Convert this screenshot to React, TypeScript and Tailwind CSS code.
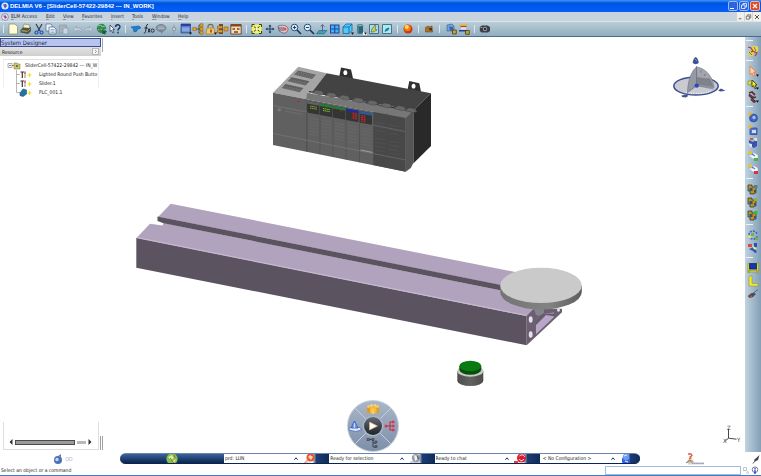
import type { ReactNode } from 'react';

type IconProps = { children: ReactNode };

const Icon = ({ children }: IconProps) => (
  <svg viewBox="0 0 12 12" className="h-3 w-3 shrink-0" aria-hidden="true">
    {children}
  </svg>
);

const DropMark = () => <path d="M9 9.500h3L10.500 11.800z" fill="#111" />;

type Tool = { label: string; icon: ReactNode };

const fileTools: Tool[] = [
  {
    label: 'New',
    icon: <path d="M2 1h6l2.500 2.500V11H2z" fill="#fffbd8" stroke="#8a8a62" strokeWidth=".7" />,
  },
  {
    label: 'Print',
    icon: (
      <>
        <path d="M4 1l6 1-1 4-6-1z" fill="#f4eec4" stroke="#666" strokeWidth=".5" />
        <path d="M.500 7l2.500-2.500 6 .5L11 4v4l-3 3-7.500-1.500z" fill="#4f5445" />
        <path d="M1.500 7l6 .8v1.200l-6-.8z" fill="#b0a44c" />
        <path d="M8 8l2.500-2.500" stroke="#a8a99a" strokeWidth=".8" />
      </>
    ),
  },
  {
    label: 'Cut',
    icon: (
      <>
        <path d="M3 1l4 7M9 1L5 8" stroke="#30364e" strokeWidth="1.100" />
        <circle cx="3.500" cy="9.500" r="1.500" fill="none" stroke="#1d55b5" strokeWidth="1.200" />
        <circle cx="8.500" cy="9.500" r="1.500" fill="none" stroke="#1d55b5" strokeWidth="1.200" />
      </>
    ),
  },
  {
    label: 'Copy',
    icon: (
      <>
        <path d="M1 1h5l1 1v6H1z" fill="#eef3fb" stroke="#51688c" strokeWidth=".7" />
        <path d="M4 4h5l2 2v5H4z" fill="#eef3fb" stroke="#51688c" strokeWidth=".7" />
        <path d="M5.500 6.500h4M5.500 8h4M5.500 9.500h4" stroke="#6c86b5" strokeWidth=".6" />
      </>
    ),
  },
  {
    label: 'Paste',
    icon: (
      <>
        <path d="M1.500 2h7v8h-7z" fill="#a5b3bd" stroke="#8c9ba7" strokeWidth=".7" />
        <path d="M5 5h5v6H5z" fill="#c9d4db" stroke="#8c9ba7" strokeWidth=".7" />
      </>
    ),
  },
  {
    label: 'Undo',
    icon: <path d="M2 6l3.500-3v2H8c2 0 3 1.500 2 4.500-.5-1.500-1-2-2-2H5.500v2z" fill="#c2ced6" stroke="#8fa0ac" strokeWidth=".6" />,
  },
  {
    label: 'Redo',
    icon: <path d="M10 6L6.500 3v2H4C2 5 1 6.500 2 9.500c.5-1.500 1-2 2-2h2.500v2z" fill="#c2ced6" stroke="#8fa0ac" strokeWidth=".6" />,
  },
  {
    label: 'Update',
    icon: (
      <>
        <circle cx="5.500" cy="5.500" r="4.700" fill="#2c8a52" />
        <path d="M2 3l3-1 1 2 3-1M2 7l3-1 2 2 3-2" stroke="#7fcf8e" strokeWidth="1" fill="none" />
        <path d="M6 7l5 1-2 3.500-3-1z" fill="#1d6240" />
        <path d="M3 5l2 3" stroke="#a23c34" strokeWidth="1" />
      </>
    ),
  },
  {
    label: 'Help pointer',
    icon: (
      <>
        <path d="M1 2l4.500 4.500H3.800L5 9.500l-1.200.5L2.600 7.200 1 8.500z" fill="#fff" stroke="#16335f" strokeWidth=".7" />
        <path d="M6.500 4c0-3 4.500-3 4.500-.3C11 5.500 9 5.300 9 7.500M9 8.800v1.600" fill="none" stroke="#15396f" strokeWidth="1.400" />
      </>
    ),
  },
];

const knowledgeTools: Tool[] = [
  {
    label: 'Catalog',
    icon: <path d="M1 4l8-1 2 2-4 1.500V8L4 9l-.5-3z" fill="#1685d8" stroke="#0b579e" strokeWidth=".6" />,
  },
  {
    label: 'Formula',
    icon: (
      <>
        <path d="M5 1.500C3.500 1 3.300 3 3 5.500S2.500 10.500.800 10M1.500 5h3" fill="none" stroke="#16222e" strokeWidth="1" />
        <path d="M5 5.500l2 4M7 5.500l-2 4" stroke="#16222e" strokeWidth=".9" />
        <circle cx="9.600" cy="7.600" r="1.600" fill="none" stroke="#16222e" strokeWidth=".9" />
      </>
    ),
  },
  {
    label: 'Comment',
    icon: (
      <>
        <ellipse cx="6" cy="5" rx="5" ry="3.500" fill="#8a98a5" stroke="#66747f" strokeWidth=".7" />
        <path d="M4 7h4l-1 4z" fill="#77858f" />
        <path d="M3 4h6M3 5.500h6" stroke="#b4c0c9" strokeWidth=".7" />
      </>
    ),
  },
  {
    label: 'Link',
    icon: <path d="M6 1.500v3M4.500 4.500h3v3h-3zM6 8v3" stroke="#8fa0ad" strokeWidth="1" fill="#c0ccd4" />,
  },
  {
    label: 'Design table',
    icon: (
      <>
        <path d="M1 1h9.500v9H1z" fill="#5b7ec9" stroke="#31508f" strokeWidth=".8" />
        <path d="M1 1h9.500v2H1z" fill="#2c3e9b" />
        <path d="M2 4.500h7.500v4H2z" fill="#8aa8df" />
        <DropMark />
      </>
    ),
  },
  {
    label: 'Structure',
    icon: (
      <>
        <path d="M4 6h4M7 2v8M7 2h2M7 10h2" stroke="#3d3b2a" strokeWidth=".8" fill="none" />
        <path d="M.800 4.500h3.500v3H.800zM8 .800h3v3H8zM8 4.500h3v3H8zM8 8.200h3v3H8z" fill="#e79e22" stroke="#8b5a10" strokeWidth=".5" />
      </>
    ),
  },
  {
    label: 'Lock',
    icon: (
      <>
        <path d="M3 5V3.500C3 .700 8 .700 8 3.500V5" fill="none" stroke="#776d4d" strokeWidth="1.100" />
        <path d="M2 5h7l1 6H1z" fill="#efc873" stroke="#a8721b" strokeWidth=".6" />
        <path d="M5 6.500h2v3H5z" fill="#c0581d" />
        <DropMark />
      </>
    ),
  },
  {
    label: 'Rules',
    icon: (
      <>
        <path d="M2 1h4v10H2z" fill="#7b4c1c" />
        <path d="M.500 3h5v2.500h-5zM.500 7h5v2.500h-5zM7 4h4v4H7z" fill="#e3a02d" stroke="#7b4c1c" strokeWidth=".5" />
      </>
    ),
  },
  {
    label: 'Checks',
    icon: (
      <>
        <path d="M.800 1.500h10.400v9.500H.800z" fill="#e9dfc9" stroke="#6e3a1d" strokeWidth=".9" />
        <path d="M1 2h10v1.500H1z" fill="#8a461f" />
        <path d="M2.500 5h2.500v2H2.500zM7 5h2.500v2H7zM4 8h4v2H4z" fill="#b1641f" />
      </>
    ),
  },
];

const viewTools: Tool[] = [
  {
    label: 'Fit all in',
    icon: (
      <>
        <path d="M1 1.500h9.500v9H1z" fill="#f5f06c" />
        <path d="M1 4V1.500h2.500M8 1.500h2.500V4M1 8v2.500h2.500M8 10.500h2.500V8M3 3.500l5.500 5M8.500 3.500L3 8.500" stroke="#35421e" strokeWidth="1" fill="none" />
        <path d="M4.800 5h2v2h-2z" fill="#fff" />
      </>
    ),
  },
  {
    label: 'Pan',
    icon: (
      <>
        <path d="M6 2v8M2 6h8" stroke="#223f6e" strokeWidth="1.100" />
        <path d="M6 1.500l1.500 2h-3zM6 10.500l-1.500-2h3zM1.500 6l2-1.500v3zM10.500 6l-2 1.500v-3z" fill="#223f6e" />
      </>
    ),
  },
  {
    label: 'Rotate',
    icon: (
      <>
        <path d="M1 3c3-1 6-1 8 0l2 2v2l-2 3H6L2 8z" fill="#f3bfb0" stroke="#5d597c" strokeWidth=".7" />
        <path d="M1 5h6M2 7h5" stroke="#33508f" strokeWidth=".9" />
        <circle cx="8" cy="6" r="1.500" fill="#c9566a" />
      </>
    ),
  },
  {
    label: 'Zoom in',
    icon: (
      <>
        <circle cx="4.500" cy="4.500" r="3.300" fill="#d8f2f7" stroke="#2c4f77" strokeWidth="1" />
        <path d="M7 7l4 4" stroke="#1c3a60" strokeWidth="1.700" />
        <path d="M4.500 2.800v3.400M2.800 4.500h3.400" stroke="#182f55" strokeWidth=".9" />
      </>
    ),
  },
  {
    label: 'Zoom out',
    icon: (
      <>
        <circle cx="4.500" cy="4.500" r="3.300" fill="#d8f2f7" stroke="#2c4f77" strokeWidth="1" />
        <path d="M7 7l4 4" stroke="#1c3a60" strokeWidth="1.700" />
        <path d="M2.800 4.500h3.400" stroke="#182f55" strokeWidth=".9" />
      </>
    ),
  },
  {
    label: 'Normal view',
    icon: (
      <>
        <path d="M3 7.500h8L8 10.800H.500z" fill="#34a7b1" stroke="#1c5f72" strokeWidth=".6" />
        <path d="M6.500 8.500V2M4.800 3.500l1.700-2 1.700 2" stroke="#5e5cae" strokeWidth="1" fill="none" />
      </>
    ),
  },
  {
    label: 'Multi view',
    icon: (
      <>
        <path d="M1 1.500h9.500v9H1z" fill="#2b3da0" />
        <path d="M2 2.500h3.200v3H2zM6.300 2.500h3.200v3H6.300zM2 6.600h3.200v3H2zM6.300 6.600h3.200v3H6.300z" fill="#39b9f0" />
      </>
    ),
  },
  {
    label: 'Isometric view',
    icon: (
      <>
        <path d="M1 4l3-3h6v6.500l-3 3H1z" fill="#4fc9f5" stroke="#1661a6" strokeWidth=".8" />
        <path d="M1 4h6v6.500M7 4l3-3" fill="none" stroke="#1661a6" strokeWidth=".8" />
        <DropMark />
      </>
    ),
  },
  {
    label: 'Shading',
    icon: (
      <>
        <path d="M2 2.500v7c0 1.800 6 1.800 6 0v-7z" fill="#296675" />
        <path d="M3 3v7" stroke="#69a5b1" strokeWidth="1" />
        <ellipse cx="5" cy="2.500" rx="3" ry="1.200" fill="#77b5bd" stroke="#2d5561" strokeWidth=".5" />
        <path d="M8 9h4v3H8z" fill="#f5f5f5" />
        <DropMark />
      </>
    ),
  },
  {
    label: 'Hide or show',
    icon: (
      <>
        <path d="M1.500 1.500h9v9h-9z" fill="#9fe2ee" stroke="#54717f" strokeWidth="1" />
        <path d="M3 9l1-3 3-4 1 1-1 3 2 1-4 2z" fill="#d7cc4d" stroke="#475b3a" strokeWidth=".6" />
      </>
    ),
  },
  {
    label: 'Swap visible space',
    icon: (
      <>
        <path d="M1.500 1.500h9v9h-9z" fill="#a5ecf7" stroke="#54717f" strokeWidth="1" />
        <path d="M3.500 9l1-3 3-1.500 1 1-1.500 2z" fill="#28769c" />
      </>
    ),
  },
];

const renderTools: Tool[] = [
  {
    label: 'Apply material',
    icon: (
      <>
        <circle cx="6" cy="6" r="4.500" fill="#cc3510" />
        <circle cx="5.500" cy="5" r="3.300" fill="#f47b16" />
        <circle cx="4.800" cy="4" r="1.900" fill="#ffe24c" />
      </>
    ),
  },
];

const packTools: Tool[] = [
  {
    label: 'Package',
    icon: (
      <>
        <path d="M2.500 4.500l2.500-1.500 1 1 3-1 .5 6h-7z" fill="#a97125" stroke="#6f4a1b" strokeWidth=".6" />
        <path d="M5.500 5h3.500v2.500H7z" fill="#4a3519" />
      </>
    ),
  },
];

const lockTools: Tool[] = [
  {
    label: 'Locked server',
    icon: (
      <>
        <path d="M2 2l5-1 2 2v5L2 8z" fill="#6aa5dc" stroke="#36588b" strokeWidth=".6" />
        <path d="M4 3.500l4 .5v4L5 7.500z" fill="#4263a2" />
        <path d="M7.500 7h3.800v4H7.500z" fill="#c6a32b" stroke="#3a3212" strokeWidth=".7" />
      </>
    ),
  },
  {
    label: 'Locked table',
    icon: (
      <>
        <path d="M1.500 1.500h8v1.500h-8z" fill="#e6b022" />
        <path d="M2.500 3h6v1h-6z" fill="#d03d2d" />
        <path d="M1 7h8v1.500H1z" fill="#2b3d9f" />
        <path d="M3 4.500h5v2H3z" fill="#dfe6ea" />
        <path d="M7.500 7.500h3.800v3.800H7.500z" fill="#c6a32b" stroke="#3a3212" strokeWidth=".7" />
      </>
    ),
  },
];

const captureTools: Tool[] = [
  {
    label: 'Capture',
    icon: (
      <>
        <path d="M.800 4L3 2.500h5.500L11 4v4L9 9.500H2.500L.800 8z" fill="#3b4048" />
        <circle cx="6" cy="6" r="2.200" fill="#8d959e" />
        <circle cx="6" cy="6" r="1.100" fill="#171b21" />
        <path d="M1.500 4.500h2" stroke="#aeb6bf" strokeWidth=".8" />
      </>
    ),
  },
];

const toolGroups = [
  { tools: fileTools, width: 'w-[114px]' },
  { tools: knowledgeTools, width: 'w-[112px]' },
  { tools: viewTools, width: 'w-[142px]' },
  { tools: renderTools, width: 'w-3' },
  { tools: packTools, width: 'w-3' },
  { tools: lockTools, width: 'w-[26px]' },
  { tools: captureTools, width: 'w-3' },
];

const blocks = (mark: string) => (
  <>
    <path d="M1 2h4v2h4v6H7v1H3V8H1z" fill="#c98b21" stroke="#27423f" strokeWidth=".8" />
    <path d="M2.500 5h3v3h-3zM7 7h2v2H7z" fill="#245f77" />
    <path d="M7 2h3.500v3H7z" fill={mark} />
  </>
);

const sideGroups: Tool[][] = [
  [
    {
      label: 'System Designer',
      icon: (
        <>
          <circle cx="8" cy="4" r="3.300" fill="#efd740" />
          <circle cx="4" cy="8.500" r="2.800" fill="#e5cf3d" />
          <path d="M1 2l3 1 2 3-2 1M6 6l4 2-2 3" stroke="#b13b2e" strokeWidth="1.100" fill="none" />
          <path d="M7 2l2 4M2 7l3 3" stroke="#5b7f9b" strokeWidth="1" />
        </>
      ),
    },
  ],
  [
    {
      label: 'Select',
      icon: (
        <>
          <path d="M3 1l6 6-2.500.2L8 10.500l-1.600.7L5 8 3 9.800z" fill="#ffd2ac" stroke="#f07f40" strokeWidth=".9" />
          <DropMark />
        </>
      ),
    },
    {
      label: 'Select box',
      icon: (
        <>
          <path d="M1 3h6v2H4v2H1z" fill="#e8dd30" stroke="#6c6c22" strokeWidth=".5" />
          <path d="M5 2l5 5-2 .2 1.200 3-1.400.5-1.200-3L5 9z" fill="#f7ec35" stroke="#30331a" strokeWidth=".8" />
          <DropMark />
        </>
      ),
    },
    {
      label: 'Connections',
      icon: (
        <>
          <path d="M2 2l3-1 3 3M2 4l3 3 4-1M4 8l3 3 2-1" fill="none" stroke="#722c35" strokeWidth="1.800" />
          <path d="M2 3l6 4M4 6l4 4" stroke="#272a31" strokeWidth=".9" />
          <DropMark />
        </>
      ),
    },
  ],
  [
    {
      label: 'New component',
      icon: (
        <>
          <circle cx="6.500" cy="7" r="4" fill="#3f64c4" stroke="#273f89" strokeWidth=".6" />
          <circle cx="7" cy="6.500" r="1.700" fill="#a4bcf0" />
          <path d="M3 .500l1 1.800 2 .7-2 .8-1 2-1-2-1.500-.8L2 2.300z" fill="#f1b521" />
        </>
      ),
    },
    {
      label: 'New port',
      icon: (
        <>
          <path d="M3 4h7v6.500H3z" fill="#5377d1" stroke="#2c479a" strokeWidth=".8" />
          <path d="M5 6h4v3H5z" fill="#cedcf8" />
          <path d="M3 .500l1 1.800 2 .7-2 .8-1 2-1-2-1.500-.8L2 2.300z" fill="#f1b521" />
        </>
      ),
    },
    {
      label: 'Import component',
      icon: (
        <>
          <path d="M2 3l4 2 4-3v7l-3 2-5-3z" fill="#3952ad" />
          <path d="M1 6l4 1v3H3zM7 1h3v3H8z" fill="#dae2ef" />
          <path d="M3 1h3v2H3z" fill="#cf593c" />
        </>
      ),
    },
    {
      label: 'Add behavior',
      icon: (
        <>
          <path d="M1 5h5V2l5 3v4L6 9z" fill="#f4f7fb" stroke="#94a0ad" strokeWidth=".5" />
          <path d="M1 1.500h4v2.500H1z" fill="#e8c52e" />
          <path d="M7 8h4v3H7z" fill="#45b641" />
          <path d="M5 4l3 2" stroke="#5876cc" strokeWidth="1.200" />
        </>
      ),
    },
    {
      label: 'Remove behavior',
      icon: (
        <>
          <path d="M1 5h5V2l5 3v4L6 9z" fill="#f4f7fb" stroke="#94a0ad" strokeWidth=".5" />
          <path d="M1 1.500h4v2.500H1z" fill="#e8c52e" />
          <path d="M7 8h4v3H7z" fill="#d8304a" />
          <path d="M5 4l3 2" stroke="#5876cc" strokeWidth="1.200" />
        </>
      ),
    },
  ],
  [
    { label: 'Logic block', icon: blocks('#57846a') },
    { label: 'Edit block', icon: blocks('#9aab47') },
    { label: 'Run block', icon: blocks('#2fc139') },
  ],
  [
    {
      label: 'Synchronize',
      icon: (
        <>
          <path d="M2 6c0-5 7-5 8-1M10 7c0 4-7 4-8 1" stroke="#3d62bc" strokeWidth="1.500" fill="none" strokeDasharray="2 1" />
          <path d="M4 4h3v3H4zM8 8h3v3H8z" fill="#6fb04f" />
          <path d="M1 7h3v2H1z" fill="#e8de6a" />
        </>
      ),
    },
    {
      label: 'Assign',
      icon: (
        <>
          <path d="M1 2h4v3H1z" fill="#de4b3e" />
          <path d="M7 1h3v4H7z" fill="#284fc0" />
          <path d="M2 7l5-2 3 5-2 1-2-2z" fill="#3155bc" />
          <path d="M5 3l5 4-3 .5z" fill="#f7ef83" />
        </>
      ),
    },
  ],
  [
    {
      label: 'Panel layout',
      icon: (
        <>
          <path d="M.800 1h2v10h-2zM9.500 1h2v10h-2zM1 8.500h10V10H1z" fill="#dfda29" stroke="#7d7c1a" strokeWidth=".4" />
          <path d="M2.500 1.500h7v5.500h-7z" fill="#1736a8" stroke="#0d2068" strokeWidth=".7" />
        </>
      ),
    },
    {
      label: 'Measure',
      icon: <path d="M2 1h3v7.500h6V11H2z" fill="#f3ec30" stroke="#93912b" strokeWidth=".6" />,
    },
    {
      label: 'Probe',
      icon: (
        <>
          <path d="M.800 8l3-2.500 3-1L9 6 6 9l-3.500 1z" fill="#4c4e53" />
          <path d="M7 4.500l4-3" stroke="#52565d" strokeWidth=".8" />
          <path d="M3 7.500h2v1.500H3z" fill="#cf4830" />
        </>
      ),
    },
  ],
];

const menus = [
  { name: 'ELM Access', width: 'w-[35px]' },
  { name: 'Edit', width: 'w-[17px]' },
  { name: 'View', width: 'w-[19px]' },
  { name: 'Favorites', width: 'w-[29px]' },
  { name: 'Insert', width: 'w-[21px]' },
  { name: 'Tools', width: 'w-[20px]' },
  { name: 'Window', width: 'w-[26px]' },
  { name: 'Help', width: 'w-[14px]' },
];

const ToolButton = ({ tool }: { tool: Tool }) => (
  <button type="button" aria-label={tool.label} className="flex h-[13px] flex-1 items-center justify-center">
    <Icon>{tool.icon}</Icon>
  </button>
);

const TitleBar = () => (
  <header className="flex h-3 shrink-0 items-center bg-linear-to-b from-[#3d95ff] via-[#0054e0] via-25% to-[#0560fa] px-px">
    <svg viewBox="0 0 8 8" className="h-2 w-2" aria-hidden="true">
      <circle cx="4" cy="4" r="3.600" fill="#dfe7fb" />
      <path d="M2 2.500l3-.5 1 2-2 2.500L3 4.500z" fill="#3a60b8" />
      <path d="M3 3l2 2" stroke="#d0494b" strokeWidth=".8" />
    </svg>
    <h1 className="flex-1 pl-px font-['Liberation_Sans',sans-serif] text-[6px] leading-[8px] font-bold whitespace-nowrap text-white">
      DELMIA V6 - [SliderCell-57422-29842 --- IN_WORK]
    </h1>
    <div className="flex gap-px">
      <button type="button" aria-label="Minimize" className="flex h-[10px] w-[10px] items-end rounded-xs border border-[#9db9f5] bg-[#2c63df] p-px">
        <span className="h-px w-1 bg-white" />
      </button>
      <button type="button" aria-label="Restore" className="flex h-[10px] w-[10px] items-center justify-center rounded-xs border border-[#9db9f5] bg-[#2c63df]">
        <svg viewBox="0 0 8 8" className="h-2 w-2">
          <path d="M3 3V1.500h3.500V5H5M1.500 3H5v3.500H1.500z" fill="none" stroke="#fff" strokeWidth=".8" />
        </svg>
      </button>
      <button type="button" aria-label="Close" className="flex h-[10px] w-[10px] items-center justify-center rounded-xs border border-[#f1b5a4] bg-[#df4a25]">
        <svg viewBox="0 0 8 8" className="h-2 w-2">
          <path d="M2 2l4 4M6 2L2 6" stroke="#fff" strokeWidth="1.200" />
        </svg>
      </button>
    </div>
  </header>
);

const MenuBar = () => (
  <nav className="flex h-[9px] shrink-0 items-center bg-[#c7d4de] pl-px">
    <svg viewBox="0 0 8 8" className="mr-[2px] h-2 w-2" aria-hidden="true">
      <circle cx="4" cy="4" r="3.400" fill="#e9e9f5" stroke="#7f79b5" strokeWidth=".8" />
      <path d="M2 2.500l3 .5 1 1.500-2 1.500z" fill="#c35067" />
      <path d="M4 2l1 3" stroke="#4252a0" strokeWidth=".8" />
    </svg>
    {menus.map((menu) => (
      <button key={menu.name} type="button" className={`${menu.width} text-left text-[5px] leading-[7px] whitespace-nowrap text-[#1f2733]`}>
        <span className="underline decoration-[#8a95a0] underline-offset-1">{menu.name[0]}</span>
        {menu.name.slice(1)}
      </button>
    ))}
    <div className="ml-auto flex h-full">
      <button type="button" aria-label="Minimize document" className="h-full w-2 border-r border-[#d7d7cf] bg-[#f1f0e9]">
        <svg viewBox="0 0 8 8" className="h-2 w-full">
          <path d="M2 6h3" stroke="#555" />
        </svg>
      </button>
      <button type="button" aria-label="Restore document" className="h-full w-2 border-r border-[#d7d7cf] bg-[#f1f0e9]">
        <svg viewBox="0 0 8 8" className="h-2 w-full">
          <path d="M3 3V1.500h3.500V5H5M1.500 3H5v3.500H1.500z" fill="none" stroke="#555" strokeWidth=".8" />
        </svg>
      </button>
      <button type="button" aria-label="Close document" className="h-full w-2 bg-[#f1f0e9]">
        <svg viewBox="0 0 8 8" className="h-2 w-full">
          <path d="M2 2l4 4M6 2L2 6" stroke="#555" />
        </svg>
      </button>
    </div>
  </nav>
);

const ToolBar = () => (
  <div role="toolbar" aria-label="Main tools" className="flex h-4 shrink-0 items-center border-t border-b border-t-[#dbe4ea] border-b-[#4c6c8e] bg-linear-to-b from-[#bacdd8] to-[#91adbf] pl-[3px]">
    {toolGroups.map((group, index) => (
      <div key={group.tools[0].label} className="flex items-center">
        <span className={index === 0 ? 'w-1' : 'flex w-[9px] justify-center'}>
          <span className="block h-2 w-px bg-[#dde7ec]" />
        </span>
        <div className={`flex items-center ${group.width}`}>
          {group.tools.map((tool) => (
            <ToolButton key={tool.label} tool={tool} />
          ))}
        </div>
      </div>
    ))}
  </div>
);

const treeItems = [
  { name: 'Lighted Round Push Butto', kind: 'part' },
  { name: 'Slider.1', kind: 'part' },
  { name: 'PLC_001.1', kind: 'plc' },
];

const ResourceTree = () => (
  <ul role="tree" aria-label="Resource" className="overflow-hidden pt-px pl-[3px] text-[5px] leading-[9px] whitespace-nowrap text-[#222]">
    <li role="treeitem" aria-expanded="true">
      <div className="flex h-[9px] items-center">
        <svg viewBox="0 0 18 9" className="h-[9px] w-[18px] shrink-0" aria-hidden="true">
          <path d="M1 2.500h4v4H1z" fill="#fff" stroke="#8b8b8b" strokeWidth=".7" />
          <path d="M2 4.500h2M5 4.500h2" stroke="#555" strokeWidth=".7" />
          <path d="M7 2h3l1 1h2v5H7z" fill="#cfc56a" stroke="#77723a" strokeWidth=".5" />
          <path d="M9 4h2v2H9z" fill="#5c7a58" />
        </svg>
        SliderCell-57422-29842 --- IN_W
      </div>
      <ul role="group">
        {treeItems.map((item, index) => (
          <li key={item.name} role="treeitem" className="flex h-[9px] items-center">
            <svg viewBox="0 0 32 9" className="h-[9px] w-8 shrink-0" aria-hidden="true">
              <path d={index === treeItems.length - 1 ? 'M9.500 0v4.500h3.500' : 'M9.500 0v9M9.500 4.500h3.500'} fill="none" stroke="#999" strokeWidth=".7" />
              {item.kind === 'part' ? (
                <>
                  <path d="M13.500 2h3.500M15.300 2V8" stroke="#3b3532" strokeWidth="1.200" />
                  <path d="M18 1.500v3" stroke="#a4462f" strokeWidth="1.300" />
                  <path d="M18 5v3" stroke="#555" strokeWidth=".7" />
                </>
              ) : (
                <path d="M13 5l3-4 3.500 1v4L16 8.500l-3-1z" fill="#2177a3" stroke="#194a72" strokeWidth=".6" />
              )}
              <path d="M22.500 3v4M20.500 5h4" stroke="#e8e21d" strokeWidth="1.100" />
            </svg>
            {item.name}
          </li>
        ))}
      </ul>
    </li>
  </ul>
);

const LeftPanel = () => (
  <aside className="flex w-[104px] shrink-0 flex-col pt-px pb-[2px]">
    <div className="flex">
      <div className="w-[101px] shrink-0">
        <h2 className="h-[9px] border border-[#3c4c8e] bg-[#b7c4ee] text-[6px] leading-[7px] whitespace-nowrap text-[#222a4a]">
          System Designer
        </h2>
        <div className="flex h-[9px] items-center justify-between bg-linear-to-b from-[#e2e2e2] to-[#cfcfcf] pr-[2px] pl-[2px]">
          <span className="text-[5px] leading-[8px] text-[#222]">Resource</span>
          <button type="button" aria-label="Expand resource panel" className="flex h-[7px] w-[7px] items-center justify-center border border-[#b5b5b5] bg-[#f4f4f4]">
            <svg viewBox="0 0 5 5" className="h-[5px] w-[5px]">
              <path d="M2 1l1.500 1.500L2 4" fill="none" stroke="#777" strokeWidth=".7" />
            </svg>
          </button>
        </div>
      </div>
      <span className="ml-px h-[14px] w-px bg-[#a8a8a8]" />
    </div>
    <div className="mt-[3px] mr-[5px] ml-[3px] flex flex-1 flex-col overflow-hidden border-t border-[#e2e2e2]">
      <div className="h-7 border-x border-[#eeeeee]">
        <ResourceTree />
      </div>
    </div>
    <div className="flex items-end">
      <div className="ml-[3px] flex h-7 w-[96px] items-end border-x border-b border-[#dedede] pb-1">
        <div className="flex w-full items-center gap-[2px] pr-[6px] pl-[5px]">
          <button type="button" aria-label="Scroll left">
            <svg viewBox="0 0 4 6" className="h-[6px] w-1">
              <path d="M3.500 0v6L.500 3z" fill="#333" />
            </svg>
          </button>
          <span className="h-[5px] flex-1 border border-[#4b4b4b] bg-[#9b9b9b]" />
          <span className="h-[3px] w-[9px] bg-[#b9b9b9]" />
          <button type="button" aria-label="Scroll right">
            <svg viewBox="0 0 4 6" className="h-[6px] w-1">
              <path d="M.500 0v6l3-3z" fill="#333" />
            </svg>
          </button>
        </div>
      </div>
      <span className="ml-px h-[14px] w-[3px] border-x border-[#a0a0a0]" />
    </div>
  </aside>
);

const Plc = () => {
  const modules = [307, 320, 333, 346, 359.5];
  const slope = (x: number) => (x - 273) * 0.2;
  return (
    <g>
      <path fillRule="evenodd" d="M339 78l2-10.500 10 2 2.500 11zM345.300 70.300a2 2.400 0 1 0 .1 0z" fill="#303030" />
      <path fillRule="evenodd" d="M407.300 91l2-10 10 2.300 2 10zM413.500 83.800a2 2.400 0 1 0 .1 0z" fill="#303030" />
      <path d="M326.700 73.300L431 93.300 413.300 110.500 306.700 91z" fill="#434343" />
      <path d="M431 93.300V146l-17.700 17.500V110.500z" fill="#292929" />
      <path d="M273 92.700l25.300-26 28.400 6.600-20 26z" fill="#a5a5a5" />
      <g fill="#5f5f5f">
        <path d="M298 70.500l18 4.200-4 4.300-18-4.200z" />
        <path d="M291.500 77.200l18 4-4 4.300-18-4.200z" />
        <path d="M285.500 84l18 4-4 4.300-18-4.200z" />
      </g>
      <g stroke="#a5a5a5" strokeWidth=".5" strokeDasharray=".8 1">
        <path d="M296 72.800l18 4.200M294.800 74l18 4.200M289.700 79.500l18 4M288.500 80.900l18 4M283.700 86.200l18 4M282.500 87.500l18 4M297.500 71.800l18 4" />
      </g>
      <path d="M273 92.700l33.700 6.600 99 18.400v54L273 145z" fill="#606060" />
      <path d="M373.300 110.500l32.400 6.600v54.600l-32.400-6.600z" fill="#484848" />
      <path d="M405.700 117.500l7.600-7.500V163l-2.500 5-5.100 3.700z" fill="#555" />
      <path d="M307 93l106.300 17.500-7.600 7.500-99.400-18.700z" fill="#777" />
      <path d="M309 91.500l102 19.500" stroke="#282828" strokeWidth="1.200" />
      <g fill="#676767" stroke="#3a3a3a" strokeWidth=".4">
        {[312, 325, 338, 352, 366, 380, 394, 405].map((x) => (
          <path key={x} d={`M${x} ${93 + (x - 312) * 0.19}l4-3 6 1 2 3-4 1z`} />
        ))}
      </g>
      {modules.map((x, i) => {
        const y = 101 + (x - 307) * 0.19;
        const cap = ['#626262', '#267a31', '#267a31', '#1e2ba0', '#245e9b'][i];
        const led = ['#83ad2b', '#78c52e', '#9f3630', '#d02028', '#d02028'][i];
        return (
          <g key={x}>
            <path d={`M${x} ${y}l12.500 2.300v11.500l-12.500-2.300z`} fill="#343434" />
            <path d={`M${x} ${y}l12.500 2.300v2.500l-12.500-2.300z`} fill={cap} />
            {i < 2 && <path d={`M${x + 3} ${y + 5}l7 1.300M${x + 3} ${y + 7}l7 1.300`} stroke={led} strokeWidth="1" strokeDasharray="1.600 .5" />}
            {i === 2 && <path d={`M${x + 7} ${y + 5}h1.500`} stroke={led} />}
            {i > 2 && <path d={`M${x + (i === 3 ? 7.5 : 2.5)} ${y + 4}v7M${x + (i === 3 ? 10 : 5)} ${y + 4.5}v7`} stroke={led} strokeWidth="1.700" strokeDasharray="1.300 .5" />}
            <path d={`M${x} ${y + 10}V${145 + slope(x)}`} stroke="#484848" strokeWidth=".5" />
            {[17, 20, 23, 27, 30, 33].map((d) => (
              <path key={d} d={`M${x + 2} ${y + d}l9 1.700`} stroke="#717171" strokeWidth=".4" />
            ))}
          </g>
        );
      })}
      <path d="M306.700 99.300v52M387 113v55" stroke="#4b4b4b" strokeWidth=".5" />
      <path d="M273 105.500l34 6.500M273 133.500l132.700 26.500M373 125l32 6.500" stroke="#8e8e8e" strokeWidth=".4" />
      <path d="M360.500 150l12 2.400" stroke="#c7c7c7" strokeWidth=".6" />
      <g stroke="#5d5d5d" strokeWidth=".4">
        {[122, 126, 130, 138, 142, 146, 150].map((y) => (
          <path key={y} d={`M375 ${y}l10 2M389 ${y + 3}l10 2`} />
        ))}
      </g>
      <circle cx="279.300" cy="109.700" r="1.800" fill="#777" />
      <path d="M285 111l17 3.300" stroke="#7b7b7b" strokeWidth=".5" />
      <path d="M297 101.200l2.500.5" stroke="#b82620" strokeWidth="1.200" />
    </g>
  );
};

const Slider = () => (
  <g>
    <path d="M170.700 203.700L520 273l-10 14-351.700-70.300z" fill="#b1a3bd" />
    <path d="M150 223.700l12.500 1.800 1-2.500L534 297l-1 13-6.300 6L136.700 237.700z" fill="#b1a3bd" />
    <path d="M157.500 216.500L510 286.700v5.500L163.500 223.200l-6-2.200z" fill="#5b535f" />
    <path d="M136.300 237.700L526.700 316v29.300L136.300 267.700z" fill="#5b535f" />
    <path d="M137 237.700L526.700 315.500" stroke="#c6b9d2" strokeWidth="1.200" />
    <path d="M526.700 315.700l7-7H562v3.500l-35.300 33z" fill="#6b6071" />
    <path d="M536 319.500l6-5.500 12-1.500v4.500L536 334.300z" fill="#b9a6c8" />
    <path d="M536 319.500l6-6h13v3l-9-1.500-10 10z" fill="#665d6a" />
    <path d="M534 309h10v4l-5 3-3-1z" fill="#85838a" />
    <ellipse cx="530.700" cy="319.500" rx="1.900" ry="3.300" fill="#e7dfed" />
    <ellipse cx="530.700" cy="334.500" rx="1.900" ry="3.300" fill="#e7dfed" />
    <ellipse cx="558.500" cy="310" rx="1.500" ry="1.800" fill="#e7dfed" />
    <path d="M500.200 285.500v6.500a40.800 17.500 0 0 0 81.600 0v-6.500z" fill="url(#discSide)" />
    <ellipse cx="541" cy="285.400" rx="40.800" ry="17.700" fill="#cacaca" />
  </g>
);

const PushButton = () => (
  <g>
    <path d="M457.300 371v9.500a13 5.600 0 0 0 26 0V371z" fill="url(#baseSide)" />
    <ellipse cx="470.300" cy="371" rx="13" ry="5.700" fill="#c7c7c7" />
    <path d="M459.300 366v3.500a11 5.200 0 0 0 22 0V366z" fill="#064f0b" />
    <ellipse cx="470.300" cy="366" rx="11" ry="5.300" fill="#0a7b10" />
  </g>
);

const Compass = () => (
  <g>
    <ellipse cx="696" cy="86" rx="22.200" ry="9" fill="#c9cbd0" stroke="#3c4d91" strokeWidth="1.500" />
    <path d="M686 92c7 2 18 2 25-1" fill="none" stroke="#fff" strokeWidth="1" strokeDasharray="1 1.500" />
    <path d="M696.500 67c9 1 17 10 17.500 21l-17.500-2.500z" fill="#a3a5aa" stroke="#767f98" strokeWidth=".7" />
    <path d="M696.500 77l14 2 3 8-17-2.500z" fill="#7f8389" />
    <path d="M696.500 67c-5 4-8.500 13-9 25.500l9-7z" fill="#96999f" stroke="#6b7899" strokeWidth=".7" />
    <path d="M701 70.500v2M705 74l-.5 2M709 78l-1 1.500" stroke="#555b70" strokeWidth=".6" />
    <path d="M696.500 66v19.500l17 3.500M696.500 85.500l-10 8" fill="none" stroke="#6470a0" strokeWidth=".6" />
    <circle cx="696.700" cy="85.600" r="2.200" fill="#3446b4" />
    <path d="M695.700 57c2 1 3 4 3 6-1.500 1.500-4.500 1.500-6 0 0-2 1-5 3-6z" fill="#3f5196" />
    <path d="M695 59l2 2" stroke="#99a7d5" strokeWidth=".7" />
    <path d="M718 90.500l3-2 4.500 2.300-5 .7zM681.500 95.500l5-1 2 1.500-3 1.500-3.500-.5z" fill="#44548f" />
  </g>
);

const Axes = () => (
  <g>
    <path d="M728.500 429v9.200l8 1M728.500 438.200l-3 2.500" fill="none" stroke="#333" strokeWidth=".9" />
    <g fill="#444" className="text-[6px]">
      <text x="727" y="430">Z</text>
      <text x="737" y="442">Y</text>
      <text x="723" y="443">X</text>
    </g>
  </g>
);

const Scene = () => (
  <svg viewBox="104 37 641 415" className="h-full w-full" role="img" aria-label="Slider cell with controller, slider and push button">
    <defs>
      <linearGradient id="discSide">
        <stop offset="0" stopColor="#747474" />
        <stop offset=".6" stopColor="#838383" />
        <stop offset="1" stopColor="#5d5d5d" />
      </linearGradient>
      <linearGradient id="baseSide">
        <stop offset="0" stopColor="#4c4d4b" />
        <stop offset=".5" stopColor="#62635f" />
        <stop offset="1" stopColor="#4c4d4b" />
      </linearGradient>
    </defs>
    <Plc />
    <Slider />
    <PushButton />
    <Compass />
    <Axes />
  </svg>
);

const RadialMenu = () => (
  <div className="absolute bottom-0 left-1/2 grid h-[52px] w-[52px] -translate-x-1/2 grid-cols-[15px_20px_15px] grid-rows-[15px_20px_13px] place-items-center overflow-hidden rounded-full border border-[#c5cedb] bg-linear-to-b from-[#a9b6c8] to-[#7e8fa9]">
    <svg viewBox="0 0 50 50" className="absolute inset-0 h-full w-full" aria-hidden="true">
      <path d="M7 7l36 36M43 7L7 43" stroke="#c7d0dd" strokeWidth="1" />
      <circle cx="25" cy="25" r="10.500" fill="#a9b5c5" />
    </svg>
    <button type="button" aria-label="People" className="relative col-start-2 row-start-1">
      <svg viewBox="0 0 14 12" className="h-3 w-[14px]">
        <path d="M1 5c0-2 3-2 3 0v5H1zM10 5c0-2 3-2 3 0v5h-3z" fill="#e39a20" />
        <path d="M4 4c0-2 3-2 3 0v6H4zM7.500 4c0-2 3-2 3 0v6h-3z" fill="#f3ba3b" />
        <circle cx="2.500" cy="3.500" r="1.300" fill="#f9d271" />
        <circle cx="5.500" cy="2.300" r="1.400" fill="#f9d271" />
        <circle cx="9" cy="2.300" r="1.400" fill="#f9d271" />
        <circle cx="11.600" cy="3.500" r="1.300" fill="#f9d271" />
        <path d="M5.500 7c0-2 3-2 3 0v4h-3z" fill="#fccb4f" />
      </svg>
    </button>
    <button type="button" aria-label="Search" className="relative col-start-1 row-start-2">
      <svg viewBox="0 0 14 12" className="h-3 w-[14px]">
        <path d="M1 8l5-1 6 .5 1.500 2.500-6 1.500L1 10z" fill="#dce8fb" stroke="#3f62b7" strokeWidth=".7" />
        <path d="M3.500 8C4 5 6 2 6.500 1L10 8z" fill="#7ca0e7" stroke="#2d50ac" strokeWidth=".8" />
        <path d="M6.500 3v5" stroke="#dbe8ff" strokeWidth=".8" />
      </svg>
    </button>
    <button type="button" aria-label="Play" className="relative col-start-2 row-start-2 flex h-[18px] w-[18px] items-center justify-center rounded-full bg-linear-to-b from-[#646b74] to-[#20252c]">
      <svg viewBox="0 0 10 10" className="h-[10px] w-[10px]">
        <path d="M1.500 1l8 4-8 4z" fill="#fff" stroke="#d7b279" strokeWidth=".7" />
      </svg>
    </button>
    <button type="button" aria-label="Relations" className="relative col-start-3 row-start-2">
      <svg viewBox="0 0 12 14" className="h-[14px] w-3">
        <path d="M2 7h7M6 9V3h3M6 7v4h3" fill="none" stroke="#c92942" strokeWidth="1.100" />
        <circle cx="2" cy="7" r="1.500" fill="#d73850" />
        <path d="M8 1.800h2.500v2.400H8zM8 5.800h2.500v2.400H8zM8 9.800h2.500v2.400H8z" fill="#d73850" />
      </svg>
    </button>
    <button type="button" aria-label="Structure" className="relative col-start-2 row-start-3">
      <svg viewBox="0 0 14 12" className="h-3 w-[14px]">
        <path d="M2 2.500h5v7.500h3M7 6h3" fill="none" stroke="#373b43" strokeWidth=".9" />
        <path d="M1 1.500h2.500v2H1zM9 4h2v2H9zM9 8.500h2v2H9zM6 1.500h2v2H6z" fill="#717982" stroke="#30353d" strokeWidth=".6" />
      </svg>
    </button>
  </div>
);

const SideBar = () => (
  <div role="toolbar" aria-label="Design tools" className="flex w-4 shrink-0 flex-col bg-linear-to-r from-[#c1d3df] to-[#839fb6]">
    {sideGroups.map((group) => (
      <div key={group[0].label}>
        <span className="flex h-[7px] items-center pl-px">
          <span className="block h-px w-[7px] bg-[#edf3f6]" />
        </span>
        {group.map((tool) => (
          <div key={tool.label} className="flex">
            <ToolButton tool={tool} />
          </div>
        ))}
      </div>
    ))}
  </div>
);

const barFields = [
  {
    label: 'Product',
    value: 'prd: LUN',
    icon: (
      <>
        <circle cx="7.500" cy="4.500" r="4" fill="#e4562b" />
        <path d="M5 4l2-2 3 2-2 3z" fill="#fbd3bd" />
        <path d="M5 7l-4 4" stroke="#f2a175" strokeWidth="1.800" />
        <path d="M3 9l6 1.500" stroke="#dedede" strokeWidth="1.200" />
      </>
    ),
  },
  {
    label: 'Selection',
    value: 'Ready for selection',
    icon: (
      <>
        <ellipse cx="6" cy="9.500" rx="5.500" ry="2" fill="#d2d3d5" />
        <circle cx="7" cy="5" r="4.200" fill="#989da3" />
        <path d="M5 2l3 1v4L6 8z" fill="#f0f1f2" />
        <path d="M8 3l2 3" stroke="#494d54" strokeWidth="1" />
      </>
    ),
  },
  {
    label: 'Chat',
    value: 'Ready to chat',
    icon: (
      <>
        <circle cx="7.500" cy="5" r="4.500" fill="#d91f2b" />
        <path d="M5.500 3c2-2 5-1 5 1M5 6c1 2 4 2 5 0" fill="none" stroke="#fff" strokeWidth="1" />
        <path d="M0 8h4v3H0z" fill="#e53a42" />
        <path d="M4 10l4-1" stroke="#f7babc" strokeWidth="1.200" />
      </>
    ),
  },
  {
    label: 'Configuration',
    value: '< No Configuration >',
    icon: (
      <>
        <path d="M2 5l4-2 4 1v5l-4 2.500-4-2z" fill="#2e63dd" />
        <circle cx="6" cy="4" r="3.200" fill="#699cf5" />
        <path d="M4 3l3-1M5 8l3 1" stroke="#deebff" strokeWidth="1.100" />
      </>
    ),
  },
];

const BottomBar = () => (
  <div className="flex h-[13px] shrink-0 items-center">
    <div className="flex w-[120px] items-center justify-center gap-[2px] pl-[6px]">
      <svg viewBox="0 0 10 12" className="h-3 w-[10px]" aria-hidden="true">
        <circle cx="5" cy="7" r="4" fill="#4c70b7" />
        <circle cx="4" cy="6.500" r="1.700" fill="#c7d8f4" />
        <path d="M5 3l3-2v3z" fill="#5f7fc0" />
      </svg>
      <svg viewBox="0 0 8 8" className="h-2 w-2" aria-hidden="true">
        <path d="M1 2.500h2.500v3H1zM4.500 2.500H7v3H4.500z" fill="none" stroke="#c7d0df" strokeWidth=".8" />
      </svg>
    </div>
    <div className="flex h-[11px] flex-1 overflow-hidden rounded-full border-t border-b border-t-[#6b84ae] border-b-[#0b2551] bg-linear-to-b from-[#3c639b] to-[#0b2551]">
      <div className="flex w-[104px] items-center justify-center">
        <svg viewBox="0 0 12 12" className="h-3 w-3 shrink-0" aria-hidden="true">
          <circle cx="6" cy="6" r="5.700" fill="#7fc24b" />
          <path d="M2 4l4-2 2 3-3 2zM6 8l4-2-2 4z" fill="#d8ee9a" />
          <path d="M4 5l4 5M8 2l1 3" stroke="#c24d3a" strokeWidth=".9" />
        </svg>
      </div>
      {barFields.map((field, index) => (
        <div key={field.label} className={`flex items-center ${index === 3 ? 'flex-[100]' : 'flex-[105]'}`}>
          <div className="flex h-full min-w-0 flex-1 items-center bg-white pr-[3px]">
            <select aria-label={field.label} className={`h-[9px] min-w-0 flex-1 appearance-none bg-white text-[5px] leading-[9px] text-[#1c1c1c] ${index === 3 ? 'pl-[3px]' : 'pl-px'}`}>
              <option>{field.value}</option>
            </select>
            <svg viewBox="0 0 4 3" className="h-[3px] w-1" aria-hidden="true">
              <path d="M.400 2.800L2 .800l1.600 2" fill="none" stroke="#1b3869" strokeWidth="1" />
            </svg>
          </div>
          <div className={`flex h-full items-center justify-start bg-linear-to-r from-white from-40% via-[#1d3c70] via-55% to-[#0f2b5c] pl-[2px] ${index === 3 ? 'w-[22px]' : 'w-7'}`}>
            <Icon>{field.icon}</Icon>
          </div>
        </div>
      ))}
    </div>
    <div className="flex w-[121px] items-center justify-between pr-px pl-11">
      <svg viewBox="0 0 22 12" className="h-3 w-[22px]" aria-hidden="true">
        <path d="M4 1h3l1 1.500-2 1.500 1 1-2 1" fill="none" stroke="#d95a4a" strokeWidth="1.300" />
        <path d="M2 10l3-4 4 1 1 3z" fill="#e6b265" />
        <path d="M2 10l4-3 2 3" stroke="#7180a5" strokeWidth="1" fill="none" />
        <path d="M4 9.500h16v2H4z" fill="#d3d2df" />
        <path d="M8 10.300h12" stroke="#8785a6" strokeWidth=".9" strokeDasharray="1.500 .6" />
      </svg>
      <svg viewBox="0 0 8 10" className="h-[10px] w-2" aria-hidden="true">
        <path d="M7.500 1L6 6 3 7.500 2 6z" fill="#3f4349" />
        <path d="M3 7L1 9.500" stroke="#555" strokeWidth="1" />
      </svg>
    </div>
  </div>
);

const StatusBar = () => (
  <footer className="flex h-[11px] shrink-0 items-center border-b border-[#3f7bc8] pr-[2px] pl-px">
    <p className="flex-1 text-[5px] leading-[9px] whitespace-nowrap text-[#1c1c1c]">Select an object or a command</p>
    <input type="text" aria-label="Power input" className="h-[9px] w-[136px] border border-[#a5bdd6] bg-white px-px text-[5px] outline-none" />
    <svg viewBox="0 0 8 8" className="ml-px h-2 w-2" aria-hidden="true">
      <path d="M1.500 1.500h3v3h-3zM4.500 4.500l2 2M4 7h3" fill="none" stroke="#b3b8b9" strokeWidth=".8" />
    </svg>
    <button type="button" aria-label="Information" className="ml-px">
      <svg viewBox="0 0 8 8" className="h-2 w-2">
        <circle cx="4" cy="3.700" r="2.800" fill="#fff" stroke="#55588b" strokeWidth=".8" />
        <path d="M4 2v1M4 3.500V8" stroke="#2027c9" strokeWidth="1.200" />
      </svg>
    </button>
  </footer>
);

const App = () => {
  return (
    <div className="flex h-screen flex-col overflow-hidden bg-white font-['DejaVu_Sans_Condensed','DejaVu_Sans',sans-serif]">
      <TitleBar />
      <MenuBar />
      <ToolBar />
      <main className="flex min-h-0 flex-1">
        <div className="relative flex min-w-0 flex-1">
          <LeftPanel />
          <div className="min-w-0 flex-1">
            <Scene />
          </div>
          <RadialMenu />
        </div>
        <SideBar />
      </main>
      <BottomBar />
      <StatusBar />
    </div>
  );
};

export default App;
